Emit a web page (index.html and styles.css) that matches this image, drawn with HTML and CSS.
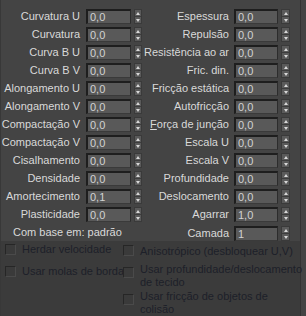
FILE: index.html
```html
<!DOCTYPE html>
<html>
<head>
<meta charset="utf-8">
<link rel="stylesheet" href="styles.css">
</head>
<body>
<div class="panel">
  <div class="params">
    <div class="row"><span class="lbl">Curvatura U</span><span class="field">0,0</span><span class="spin"><i class="up"></i><i class="dn"></i></span><span class="lbl">Espessura</span><span class="field f2">0,0</span><span class="spin"><i class="up"></i><i class="dn"></i></span></div>
    <div class="row"><span class="lbl">Curvatura</span><span class="field">0,0</span><span class="spin"><i class="up"></i><i class="dn"></i></span><span class="lbl">Repulsão</span><span class="field f2">0,0</span><span class="spin"><i class="up"></i><i class="dn"></i></span></div>
    <div class="row"><span class="lbl">Curva B U</span><span class="field">0,0</span><span class="spin"><i class="up"></i><i class="dn"></i></span><span class="lbl">Resistência ao ar</span><span class="field f2">0,0</span><span class="spin"><i class="up"></i><i class="dn"></i></span></div>
    <div class="row"><span class="lbl">Curva B V</span><span class="field">0,0</span><span class="spin"><i class="up"></i><i class="dn"></i></span><span class="lbl">Fric. din.</span><span class="field f2">0,0</span><span class="spin"><i class="up"></i><i class="dn"></i></span></div>
    <div class="row"><span class="lbl">Alongamento U</span><span class="field">0,0</span><span class="spin"><i class="up"></i><i class="dn"></i></span><span class="lbl">Fricção estática</span><span class="field f2">0,0</span><span class="spin"><i class="up"></i><i class="dn"></i></span></div>
    <div class="row"><span class="lbl">Alongamento V</span><span class="field">0,0</span><span class="spin"><i class="up"></i><i class="dn"></i></span><span class="lbl">Autofricção</span><span class="field f2">0,0</span><span class="spin"><i class="up"></i><i class="dn"></i></span></div>
    <div class="row"><span class="lbl">Compactação V</span><span class="field">0,0</span><span class="spin"><i class="up"></i><i class="dn"></i></span><span class="lbl"><u>F</u>orça de junção</span><span class="field f2">0,0</span><span class="spin"><i class="up"></i><i class="dn"></i></span></div>
    <div class="row"><span class="lbl">Compactação V</span><span class="field">0,0</span><span class="spin"><i class="up"></i><i class="dn"></i></span><span class="lbl">Escala U</span><span class="field f2">0,0</span><span class="spin"><i class="up"></i><i class="dn"></i></span></div>
    <div class="row"><span class="lbl">Cisalhamento</span><span class="field">0,0</span><span class="spin"><i class="up"></i><i class="dn"></i></span><span class="lbl">Escala V</span><span class="field f2">0,0</span><span class="spin"><i class="up"></i><i class="dn"></i></span></div>
    <div class="row"><span class="lbl">Densidade</span><span class="field">0,0</span><span class="spin"><i class="up"></i><i class="dn"></i></span><span class="lbl">Profundidade</span><span class="field f2">0,0</span><span class="spin"><i class="up"></i><i class="dn"></i></span></div>
    <div class="row"><span class="lbl">Amortecimento</span><span class="field">0,1</span><span class="spin"><i class="up"></i><i class="dn"></i></span><span class="lbl">Deslocamento</span><span class="field f2">0,0</span><span class="spin"><i class="up"></i><i class="dn"></i></span></div>
    <div class="row"><span class="lbl">Plasticidade</span><span class="field">0,0</span><span class="spin"><i class="up"></i><i class="dn"></i></span><span class="lbl">Agarrar</span><span class="field f2">1,0</span><span class="spin"><i class="up"></i><i class="dn"></i></span></div>
    <div class="row last"><span class="base">Com base em: padrão</span><span class="lbl">Camada</span><span class="field f2">1</span><span class="spin"><i class="up"></i><i class="dn"></i></span></div>
  </div>
  <div class="opts">
    <div class="col left">
      <div class="opt o1"><span class="cb"></span><span class="txt">Herdar velocidade</span></div>
      <div class="opt o2"><span class="cb"></span><span class="txt">Usar molas de borda</span></div>
    </div>
    <div class="col right">
      <div class="opt r1"><span class="cb"></span><span class="txt">Anisotrópico (desbloquear U,V)</span></div>
      <div class="opt r2 multi"><span class="cb"></span><span class="txt">Usar profundidade/deslocamento<br>de tecido</span></div>
      <div class="opt r3 multi"><span class="cb"></span><span class="txt">Usar fricção de objetos de<br>colisão</span></div>
    </div>
  </div>
</div>
</body>
</html>
```

FILE: styles.css
```css
html, body {
  margin: 0;
  padding: 0;
  background: #444444;
}
body {
  width: 306px;
  height: 316px;
  overflow: hidden;
  font-family: "Liberation Sans", Arial, sans-serif;
  font-size: 11px;
}
.panel {
  width: 300px;
  height: 316px;
  border-left: 1px solid #383838;
  border-right: 1px solid #333333;
  box-sizing: border-box;
  width: 301px;
}
.params {
  padding-top: 9px;
  display: flex;
  flex-direction: column;
  gap: 3px;
}
.row {
  display: grid;
  grid-template-columns: 79px 51px 11px 87px 49px 12px;
  height: 15px;
  align-items: stretch;
}
.row.last {
  margin-top: 1px;
}
.lbl {
  color: #d9d9d9;
  text-align: right;
  line-height: 15px;
  white-space: nowrap;
  direction: rtl;
  unicode-bidi: plaintext;
}
.lbl u {
  text-decoration: underline;
  text-underline-offset: 1px;
}
.field {
  margin-left: 6px;
  box-sizing: border-box;
  height: 15px;
  background: #595959;
  border-top: 2px solid #1e1e1e;
  border-left: 2px solid #1e1e1e;
  border-right: 1px solid #2c2c2c;
  border-bottom: 1px solid #3a3a3a;
  color: #d2d2d2;
  line-height: 12px;
  padding-left: 2px;
}
.field.f2 {
  margin-left: 5px;
}
.spin {
  margin-left: 3px;
  display: flex;
  flex-direction: column;
  box-sizing: border-box;
  height: 15px;
  background: #5a5a5a;
  border: 1px solid #3a3a3a;
}
.spin i {
  flex: 1;
  display: flex;
  align-items: center;
  justify-content: center;
  position: relative;
}
.spin i.up {
  border-bottom: 1px solid #3c3c3c;
}
.spin i::after {
  content: "";
  width: 0;
  height: 0;
  border-left: 2.5px solid transparent;
  border-right: 2.5px solid transparent;
}
.spin i.up::after {
  border-bottom: 3px solid #d8d8d8;
}
.spin i.dn::after {
  border-top: 3px solid #d8d8d8;
}
.base {
  grid-column: 1 / span 3;
  color: #d9d9d9;
  line-height: 15px;
  padding-left: 12px;
  white-space: nowrap;
  margin-top: -1px;
}
.opts {
  background: #3b3b3b;
  height: 75px;
  display: grid;
  grid-template-columns: 118px 1fr;
  padding-left: 4px;
  box-sizing: border-box;
}
.col {
  display: flex;
  flex-direction: column;
}
.opt {
  display: flex;
  align-items: flex-start;
  color: #1d2029;
  line-height: 13px;
  white-space: nowrap;
}
.cb {
  flex: none;
  width: 11px;
  height: 11px;
  box-sizing: border-box;
  border: 1px solid #262626;
  border-right-color: #4a4a4a;
  border-bottom-color: #4a4a4a;
  background: #3a3a3a;
  margin-right: 6px;
}
.left .opt .txt {
  margin-left: 0;
}
.o1 { margin-top: 2px; }
.o1 .cb { margin-top: 1px; }
.o2 { margin-top: 9px; }
.o2 .cb { margin-top: 1px; }
.r1 { margin-top: 4px; }
.r1 .cb { margin-top: 0px; }
.r2 { margin-top: 5px; }
.r2 .cb { margin-top: 4px; }
.r3 { margin-top: 1px; }
.r3 .cb { margin-top: 4px; }
```
